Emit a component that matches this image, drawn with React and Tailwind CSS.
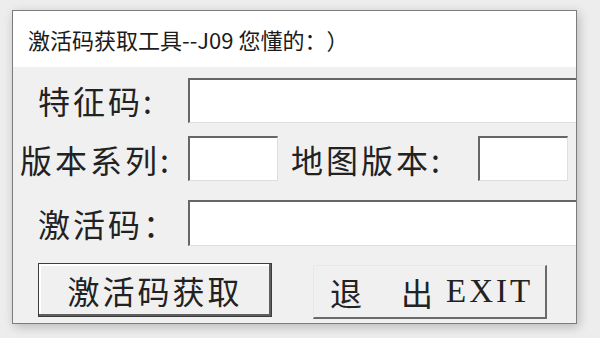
// 激活码获取工具 — classic Win32 dialog look
const cjk = { fontFamily: '"Noto Sans CJK SC", "Noto Sans", sans-serif' };
const serif = { fontFamily: '"Liberation Serif", "Noto Sans CJK SC", serif' };

// sunken edit box
const Field = ({ className = "" }) => (
  <div
    className={`h-[45px] bg-white border-t-2 border-l-2 border-t-[#666] border-l-[#666] border-b border-r border-b-[#dedede] border-r-[#dedede] shrink-0 ${className}`}
  />
);

const Label = ({ children, className = "" }) => (
  <span
    style={cjk}
    className={`text-[32px] leading-none tracking-[3px] text-[#222] whitespace-nowrap ${className}`}
  >
    {children}
  </span>
);

export default function App() {
  return (
    <div className="w-[600px] h-[338px] bg-[#ededed] pl-[12px] pt-[10px] overflow-hidden">
      <div className="w-[565px] h-[314px] border border-[#7c7c7c] bg-[#f0f0f0] overflow-hidden shadow-[2px_3px_10px_rgba(0,0,0,0.22)] flex flex-col">
        {/* title bar */}
        <div className="h-[56px] bg-white flex items-center pl-[15px] shrink-0">
          <span
            style={cjk}
            className="text-[22px] text-[#1b1b1b] whitespace-nowrap [text-spacing-trim:space-all]"
          >
            激活码获取工具--J09 您懂的：）
          </span>
        </div>

        {/* body */}
        <div className="flex flex-col pt-[11px]">
          <div className="flex items-center h-[44px]">
            <div className="w-[175px] pl-[25px] flex items-center shrink-0">
              <Label>特征码:</Label>
            </div>
            <Field className="w-[420px] h-[44px]" />
          </div>

          <div className="flex items-center h-[45px] mt-[14px]">
            <div className="w-[175px] pl-[7px] flex items-center shrink-0">
              <Label>版本系列:</Label>
            </div>
            <Field className="w-[90px]" />
            <div className="w-[200px] pl-[13px] flex items-center shrink-0">
              <Label>地图版本:</Label>
            </div>
            <Field className="w-[90px]" />
          </div>

          <div className="flex items-center h-[46px] mt-[19px]">
            <div className="w-[175px] pl-[25px] flex items-center shrink-0">
              <Label>激活码：</Label>
            </div>
            <Field className="w-[420px] h-[46px]" />
          </div>

          <div className="flex items-start mt-[17px] pl-[25px] gap-[41px]">
            <button className="w-[234px] h-[54px] bg-[#f0f0f0] border border-[#3c3c3c] shadow-[inset_-2px_-2px_0_#5e5e5e,inset_2px_2px_0_#ffffff] flex items-center justify-center shrink-0">
              <Label className="tracking-[2px]">激活码获取</Label>
            </button>
            <button className="w-[234px] h-[54px] mt-[2px] bg-[#f0f0f0] border-t border-l border-t-[#e8e8e8] border-l-[#e8e8e8] border-b-2 border-r-2 border-b-[#6a6a6a] border-r-[#6a6a6a] flex items-center pl-[16px] shrink-0">
              <Label>退</Label>
              <Label className="ml-[36px]">出</Label>
              <span
                style={serif}
                className="ml-[10px] text-[33px] leading-none tracking-[3px] text-[#222]"
              >
                EXIT
              </span>
            </button>
          </div>
        </div>
      </div>
    </div>
  );
}
